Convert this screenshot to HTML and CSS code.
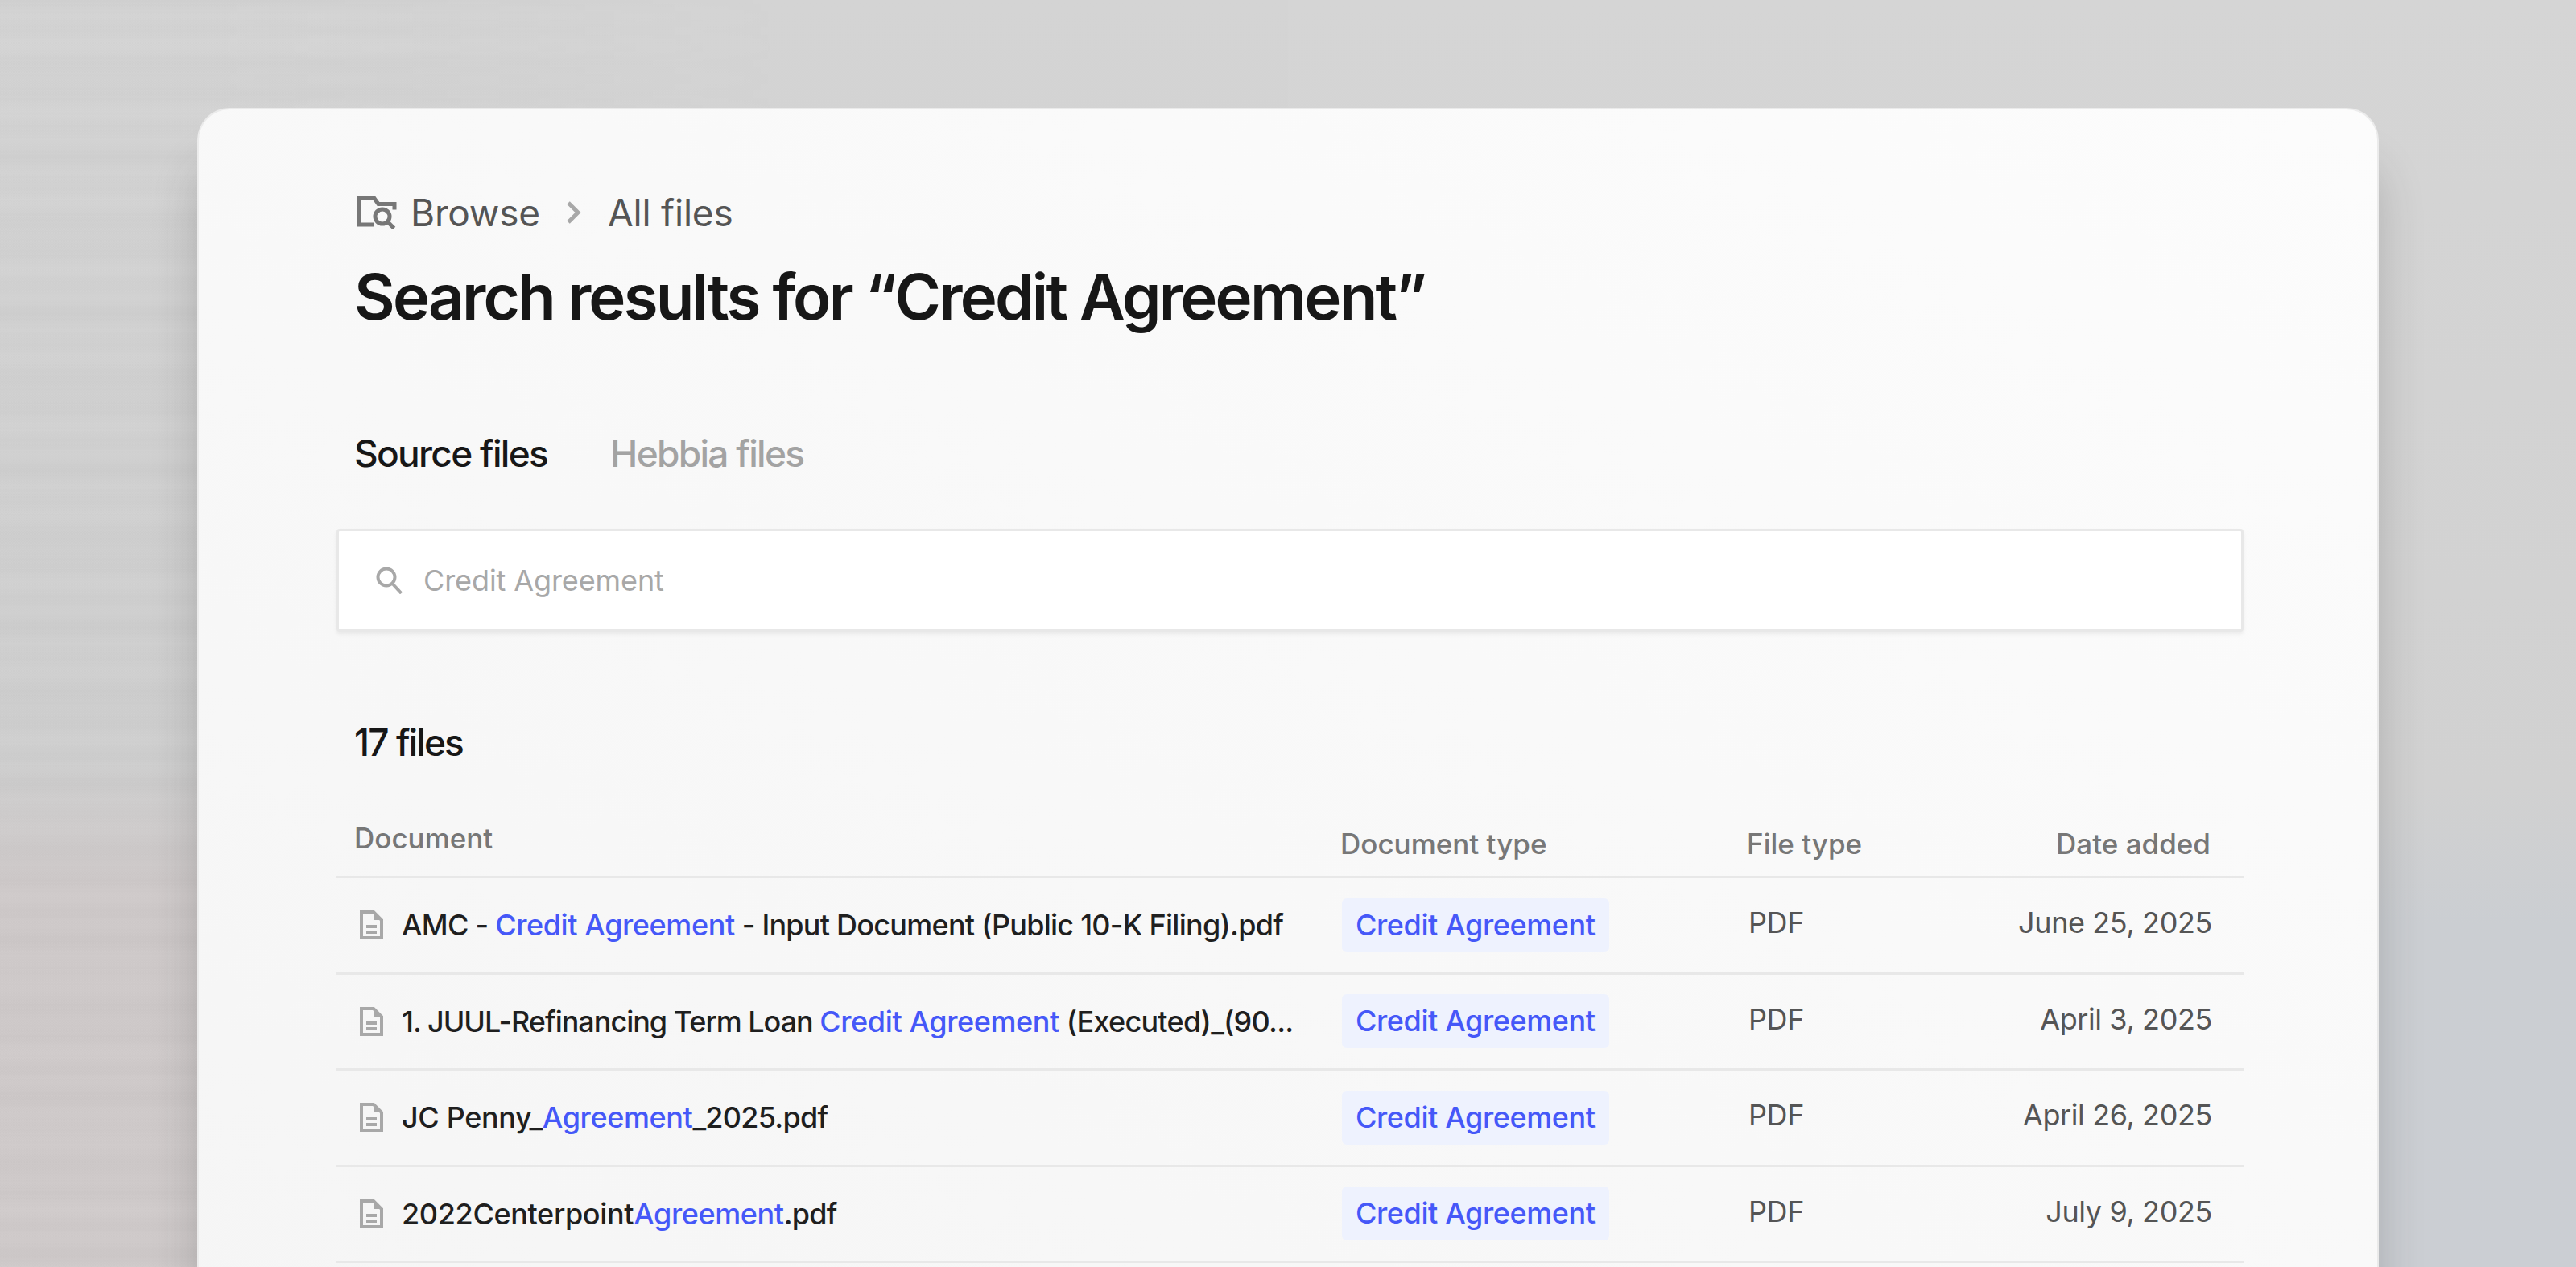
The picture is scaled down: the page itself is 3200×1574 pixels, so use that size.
FILE: index.html
```html
<!DOCTYPE html>
<html lang="en">
<head>
  <meta charset="UTF-8">
  <meta name="viewport" content="width=device-width, initial-scale=1.0">
  <title>Search results</title>
  <link rel="stylesheet" href="styles.css">
</head>
<body>
  <div class="card">
    <div class="crumbs">
      <svg class="folder-icon" width="50" height="41" viewBox="0 0 50 41" fill="none" stroke="#777" stroke-width="5">
        <path d="M21 35H2.500V2.500h18.500l5 7h20v7"/>
        <circle cx="31" cy="25" r="9"/>
        <path d="M37.500 31.500l8 8"/>
      </svg>
      <span class="crumb">Browse</span>
      <svg class="chevron" width="18" height="28" viewBox="0 0 18 28" fill="none" stroke="#a8a8a8" stroke-width="5">
        <path d="M2 2l12 12L2 26"/>
      </svg>
      <span class="crumb">All files</span>
    </div>
    <h1 class="title">Search results for “Credit Agreement”</h1>

    <div class="tabs">
      <span class="tab active">Source files</span>
      <span class="tab">Hebbia files</span>
    </div>

    <div class="search">
      <svg width="34" height="34" viewBox="0 0 34 34" fill="none" stroke="#a8a8a8" stroke-width="4">
        <circle cx="13" cy="13" r="10.500"/>
        <path d="M20.500 21l11 12"/>
      </svg>
      <span>Credit Agreement</span>
    </div>

    <div class="count">17 files</div>

    <div class="row head">
      <span class="head-doc">Document</span>
      <span>Document type</span>
      <span>File type</span>
      <span class="date">Date added</span>
    </div>

    <div class="row">
      <div class="doc">
        <svg class="doc-icon" width="29" height="36" viewBox="0 0 29 36"><path d="M2 2h15l10 10v22H2zM8 20h13M8 27h13" fill="none" stroke="#a8a8a8" stroke-width="4"/><path d="M17 1l11 11H17z" fill="#a8a8a8"/></svg>
        <span class="name">AMC - <em>Credit Agreement</em> - Input Document (Public 10-K Filing).pdf</span>
      </div>
      <div><span class="pill">Credit Agreement</span></div>
      <span class="ftype">PDF</span>
      <span class="date val">June 25, 2025</span>
    </div>
    <div class="row">
      <div class="doc">
        <svg class="doc-icon" width="29" height="36" viewBox="0 0 29 36"><path d="M2 2h15l10 10v22H2zM8 20h13M8 27h13" fill="none" stroke="#a8a8a8" stroke-width="4"/><path d="M17 1l11 11H17z" fill="#a8a8a8"/></svg>
        <span class="name"><span class="tight">1. JUUL-Refinancing Term Loan </span><em>Credit Agreement</em> (Executed)_(90...</span>
      </div>
      <div><span class="pill">Credit Agreement</span></div>
      <span class="ftype">PDF</span>
      <span class="date val">April 3, 2025</span>
    </div>
    <div class="row">
      <div class="doc">
        <svg class="doc-icon" width="29" height="36" viewBox="0 0 29 36"><path d="M2 2h15l10 10v22H2zM8 20h13M8 27h13" fill="none" stroke="#a8a8a8" stroke-width="4"/><path d="M17 1l11 11H17z" fill="#a8a8a8"/></svg>
        <span class="name"><span class="loose">JC Penny_</span><em>Agreement</em>_2025.pdf</span>
      </div>
      <div><span class="pill">Credit Agreement</span></div>
      <span class="ftype">PDF</span>
      <span class="date val">April 26, 2025</span>
    </div>
    <div class="row">
      <div class="doc">
        <svg class="doc-icon" width="29" height="36" viewBox="0 0 29 36"><path d="M2 2h15l10 10v22H2zM8 20h13M8 27h13" fill="none" stroke="#a8a8a8" stroke-width="4"/><path d="M17 1l11 11H17z" fill="#a8a8a8"/></svg>
        <span class="name"><span class="loose">2022Centerpoint</span><em>Agreement</em>.pdf</span>
      </div>
      <div><span class="pill">Credit Agreement</span></div>
      <span class="ftype">PDF</span>
      <span class="date val">July 9, 2025</span>
    </div>
  </div>
</body>
</html>
```

FILE: styles.css
```css
html, body { margin: 0; height: 1574px; overflow: hidden; }
body {
  position: relative;
  font-family: Inter, "Liberation Sans", sans-serif;
  background:
    linear-gradient(180deg, #d4d4d4 0, #cfcfcf 60%, #cfcaca 70%, #d0cbcb 100%) left top / 50% 100% no-repeat,
    linear-gradient(180deg, #d5d5d5 0, #d1d1d1 62%, #cbced2 73%, #cbced3 100%) right top / 50% 100% no-repeat;
  padding: 134px 0 0 245px;
  box-sizing: border-box;
}
/* soft horizontal streaks, fading out to the right */
body::before {
  content: "";
  position: absolute;
  left: 0;
  top: 0;
  width: 1600px;
  height: 100%;
  background:
    repeating-linear-gradient(180deg, rgba(0,0,0,0.013) 0, rgba(255,255,255,0.02) 18px, rgba(255,255,255,0.02) 22px, rgba(0,0,0,0.013) 39px),
    repeating-linear-gradient(180deg, rgba(0,0,0,0.012) 0, rgba(255,255,255,0.014) 50px, rgba(0,0,0,0.012) 97px);
  -webkit-mask-image: linear-gradient(90deg, #000 0, #000 240px, transparent 1000px);
  mask-image: linear-gradient(90deg, #000 0, #000 240px, transparent 1000px);
}
.card {
  position: relative;
  width: 2710px;
  height: 1600px;
  box-sizing: border-box;
  padding: 106px 166px 0 171px;
  background: linear-gradient(to bottom left, #fcfcfc, #f5f5f5);
  border: 2px solid rgba(232,232,232,0.8);
  border-bottom: none;
  border-radius: 40px 40px 0 0;
  box-shadow: 0 70px 55px rgba(50,50,50,0.22);
}
.crumbs { display: flex; align-items: center; height: 44px; margin-left: 26px; }
.folder-icon { margin-right: 16px; }
.crumb { font-size: 46px; color: #555; letter-spacing: -0.200px; }
.chevron { margin: 0 33px; }
.title { margin: 35px 0 0 22px; font-size: 78px; line-height: 96px; font-weight: 600; color: #171717; letter-spacing: -2.800px; }
.tabs { display: flex; gap: 78px; margin: 119px 0 0 22px; }
.tab { font-size: 46px; line-height: 54px; font-weight: 550; color: #a3a3a3; letter-spacing: -1.700px; }
.tab.active { color: #171717; }
.search {
  display: flex;
  align-items: center;
  gap: 25px;
  height: 128px;
  box-sizing: border-box;
  margin: 67px 0 0 0;
  padding-left: 46px;
  background: #fff;
  border: 3px solid #e8e8e8;
  border-radius: 4px;
  box-shadow: 0 3px 5px rgba(0,0,0,0.06);
  font-size: 36px;
  letter-spacing: -0.100px;
  color: #a8a8a8;
}
.count { margin: 110px 0 0 22px; font-size: 46px; line-height: 54px; font-weight: 550; color: #171717; letter-spacing: -1.900px; }
.row {
  display: grid;
  grid-template-columns: 1225px 505px 1fr auto;
  align-items: center;
  height: 119.500px;
  box-sizing: border-box;
  padding: 0 39px 0 22px;
  border-bottom: 3px solid #e8e8e8;
  font-size: 36px;
  letter-spacing: -0.400px;
  color: #555;
}
.row.head { height: 92px; margin-top: 50px; padding-top: 8px; padding-right: 41px; font-size: 35px; letter-spacing: 0; font-weight: 500; color: #777; }
.head-doc { position: relative; top: -7px; }
.doc { display: flex; align-items: center; gap: 23px; padding-left: 7px; }
.name { color: #1f1f1f; font-weight: 500; white-space: nowrap; letter-spacing: -0.750px; }
.name em { font-style: normal; color: #4558f8; letter-spacing: -0.400px; }
.name .tight { letter-spacing: -1.030px; }
.name .loose { letter-spacing: -0.350px; }
.pill { display: inline-block; margin-left: 2px; padding: 0 17px; line-height: 67px; background: #eef2fe; border-radius: 6px; color: #4558f8; font-weight: 500; }
.ftype { position: relative; top: -3px; margin-left: 2px; }
.date { text-align: right; }
.val { position: relative; top: -3px; }
```
